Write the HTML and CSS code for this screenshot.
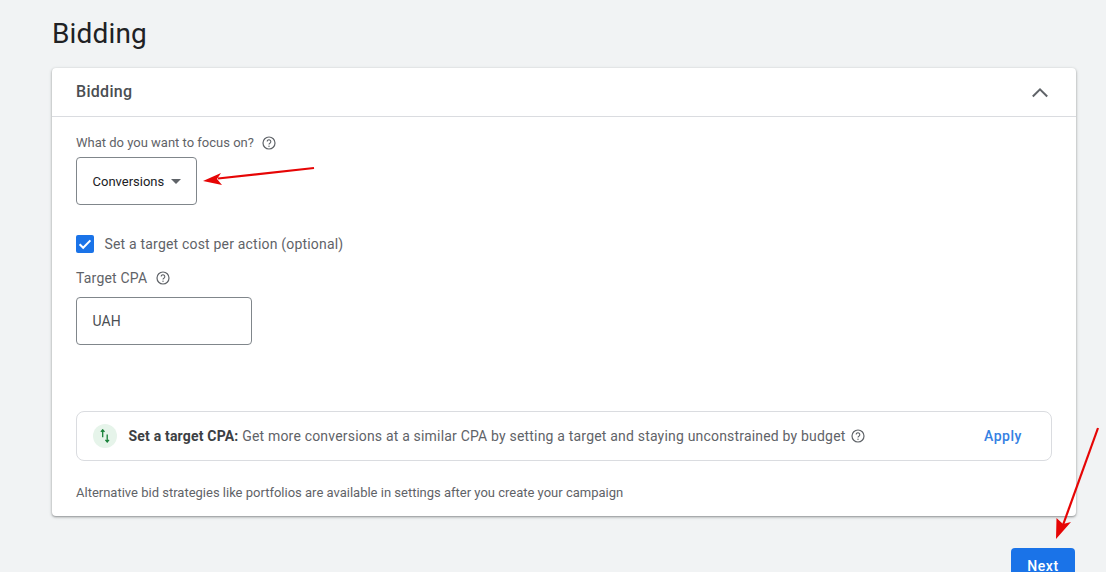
FILE: index.html
```html
<!DOCTYPE html>
<html lang="en">
<head>
<meta charset="utf-8">
<title>Bidding</title>
<link rel="stylesheet" href="styles.css">
</head>
<body>
<main class="page">
  <h1 class="title">Bidding</h1>
  <section class="card">
    <header class="card-head">
      <h2 class="card-title">Bidding</h2>
      <svg class="chevron" width="18" height="12" viewBox="0 0 18 12"><path d="M1.800 10.500 9 3.300l7.200 7.200" fill="none" stroke="#5f6368" stroke-width="2"/></svg>
    </header>
    <div class="card-body">
      <div class="label-row">
        <span>What do you want to focus on?</span>
        <svg class="help" viewBox="0 0 14 14"><use href="#q"/></svg>
      </div>
      <div class="select">
        <span>Conversions</span>
        <span class="caret"></span>
      </div>
      <label class="check-row">
        <span class="checkbox">
          <svg width="18" height="18" viewBox="0 0 18 18"><path d="M3.600 9.200 7.200 12.800 14.400 5.400" fill="none" stroke="#fff" stroke-width="2"/></svg>
        </span>
        <span>Set a target cost per action (optional)</span>
      </label>
      <div class="label-row label-cpa">
        <span>Target CPA</span>
        <svg class="help" viewBox="0 0 14 14"><use href="#q"/></svg>
      </div>
      <div class="input">UAH</div>
      <div class="tip">
        <span class="tip-icon">
          <svg width="14" height="14" viewBox="0 0 14 14"><path d="M4.700 8.200V1M2.900 2.900 4.700 .8l1.800 2.100" fill="none" stroke="#188038" stroke-width="1.300"/><path d="M9.200 5.500v7.200M7.400 10.800l1.800 2.100 1.800-2.100" fill="none" stroke="#188038" stroke-width="1.300"/></svg>
        </span>
        <p class="tip-text"><b>Set a target CPA:</b> Get more conversions at a similar CPA by setting a target and staying unconstrained by budget</p>
        <svg class="help help-tip" viewBox="0 0 14 14"><use href="#q"/></svg>
        <a class="apply">Apply</a>
      </div>
      <p class="note">Alternative bid strategies like portfolios are available in settings after you create your campaign</p>
    </div>
  </section>
  <div class="actions"><button class="next">Next</button></div>
</main>

<svg class="arrow-layer" width="1106" height="572" viewBox="0 0 1106 572">
  <path d="M314 168 218 178.500" stroke="#e60505" stroke-width="2.200" fill="none"/>
  <path d="M203 181 221 173 217 179 222 185Z" fill="#e60505"/>
  <path d="M1098 428 1063 525" stroke="#e60505" stroke-width="2.200" fill="none"/>
  <path d="M1056 539 1056.500 518 1063 524 1071 522Z" fill="#e60505"/>
</svg>

<svg class="defs" width="0" height="0">
  <defs>
    <g id="q">
      <circle cx="7" cy="7" r="6" fill="none" stroke="#5f6368" stroke-width="1.200"/>
      <path d="M5.200 5.600a1.800 1.800 0 1 1 2.900 1.400c-.7.5-1.100.8-1.100 1.500" fill="none" stroke="#5f6368" stroke-width="1.100"/>
      <circle cx="7" cy="10.200" r=".7" fill="#5f6368"/>
    </g>
  </defs>
</svg>
</body>
</html>
```

FILE: styles.css
```css
* { box-sizing: border-box; }
html, body { margin: 0; height: 572px; overflow: hidden; }
body {
  background: #f1f3f4;
  font-family: Roboto, "Liberation Sans", sans-serif;
  color: #3c4043;
  position: relative;
}
.page { padding: 0 30px 0 52px; }
.title {
  margin: 0;
  height: 68px;
  padding-top: 17px;
  font-size: 28px;
  line-height: 34px;
  font-weight: 400;
  letter-spacing: .15px;
  color: #202124;
}
.card {
  height: 448px;
  background: #fff;
  border-radius: 4px;
  box-shadow: 0 1px 2px rgba(60,64,67,.45), 0 1px 3px 1px rgba(60,64,67,.12);
}
.card-head {
  height: 49px;
  padding: 0 27px 0 24px;
  display: flex;
  align-items: center;
  justify-content: space-between;
  border-bottom: 1px solid #dadce0;
}
.card-title { margin: 0 0 2px; font-size: 16px; font-weight: 500; color: #4a4e52; letter-spacing: .3px; }
.card-body { padding: 0 24px; }
.label-row {
  display: flex;
  align-items: center;
  gap: 8px;
  height: 18px;
  margin-top: 17px;
  font-size: 13px;
  line-height: 18px;
  color: #5f6368;
}
.help { width: 14px; height: 14px; flex: none; }
.select {
  width: 121px;
  height: 48px;
  margin-top: 5px;
  padding-left: 15.500px;
  display: flex;
  align-items: center;
  gap: 7px;
  border: 1px solid #80868b;
  border-radius: 4px;
  font-size: 13px;
  color: #202124;
}
.caret {
  width: 0;
  height: 0;
  border-left: 5px solid transparent;
  border-right: 5px solid transparent;
  border-top: 5px solid #5f6368;
}
.check-row {
  display: flex;
  align-items: center;
  gap: 10.500px;
  margin-top: 30px;
  height: 18px;
  font-size: 14px;
  letter-spacing: .19px;
  color: #5f6368;
}
.checkbox {
  width: 18px;
  height: 18px;
  background: #1a73e8;
  border-radius: 2px;
  display: block;
}
.checkbox svg { display: block; }
.label-cpa { margin-top: 16px; font-size: 14px; letter-spacing: .2px; gap: 9px; }
.input {
  width: 176px;
  height: 48px;
  margin-top: 10px;
  padding-left: 15.500px;
  display: flex;
  align-items: center;
  border: 1px solid #80868b;
  border-radius: 4px;
  font-size: 14px;
  letter-spacing: .1px;
  color: #4a4e52;
}
.tip {
  height: 50px;
  margin-top: 66px;
  padding: 0 29px 0 16px;
  display: flex;
  align-items: center;
  border: 1px solid #dadce0;
  border-radius: 8px;
}
.tip-icon {
  width: 24px;
  height: 24px;
  border-radius: 50%;
  background: #e6f4ea;
  display: flex;
  align-items: center;
  justify-content: center;
  flex: none;
}
.tip-text { margin: 0 5px 0 11.500px; font-size: 14px; color: #5f6368; letter-spacing: .19px; white-space: nowrap; }
.tip-text b { font-weight: 700; color: #3c4043; }
.apply { margin-left: auto; font-size: 14px; font-weight: 500; color: #3581e3; letter-spacing: .55px; }
.note { margin: 24px 0 0; font-size: 13px; line-height: 16px; color: #5f6368; }
.actions { display: flex; justify-content: flex-end; margin-top: 32px; padding-right: 1px; }
.next {
  width: 64px;
  height: 36px;
  padding: 0 0 1px;
  border: 0;
  border-radius: 4px;
  background: #1a73e8;
  color: #fff;
  font: 500 14px Roboto, sans-serif;
  letter-spacing: .6px;
}
.arrow-layer { position: absolute; left: 0; top: 0; pointer-events: none; }
.defs { position: absolute; }
```
